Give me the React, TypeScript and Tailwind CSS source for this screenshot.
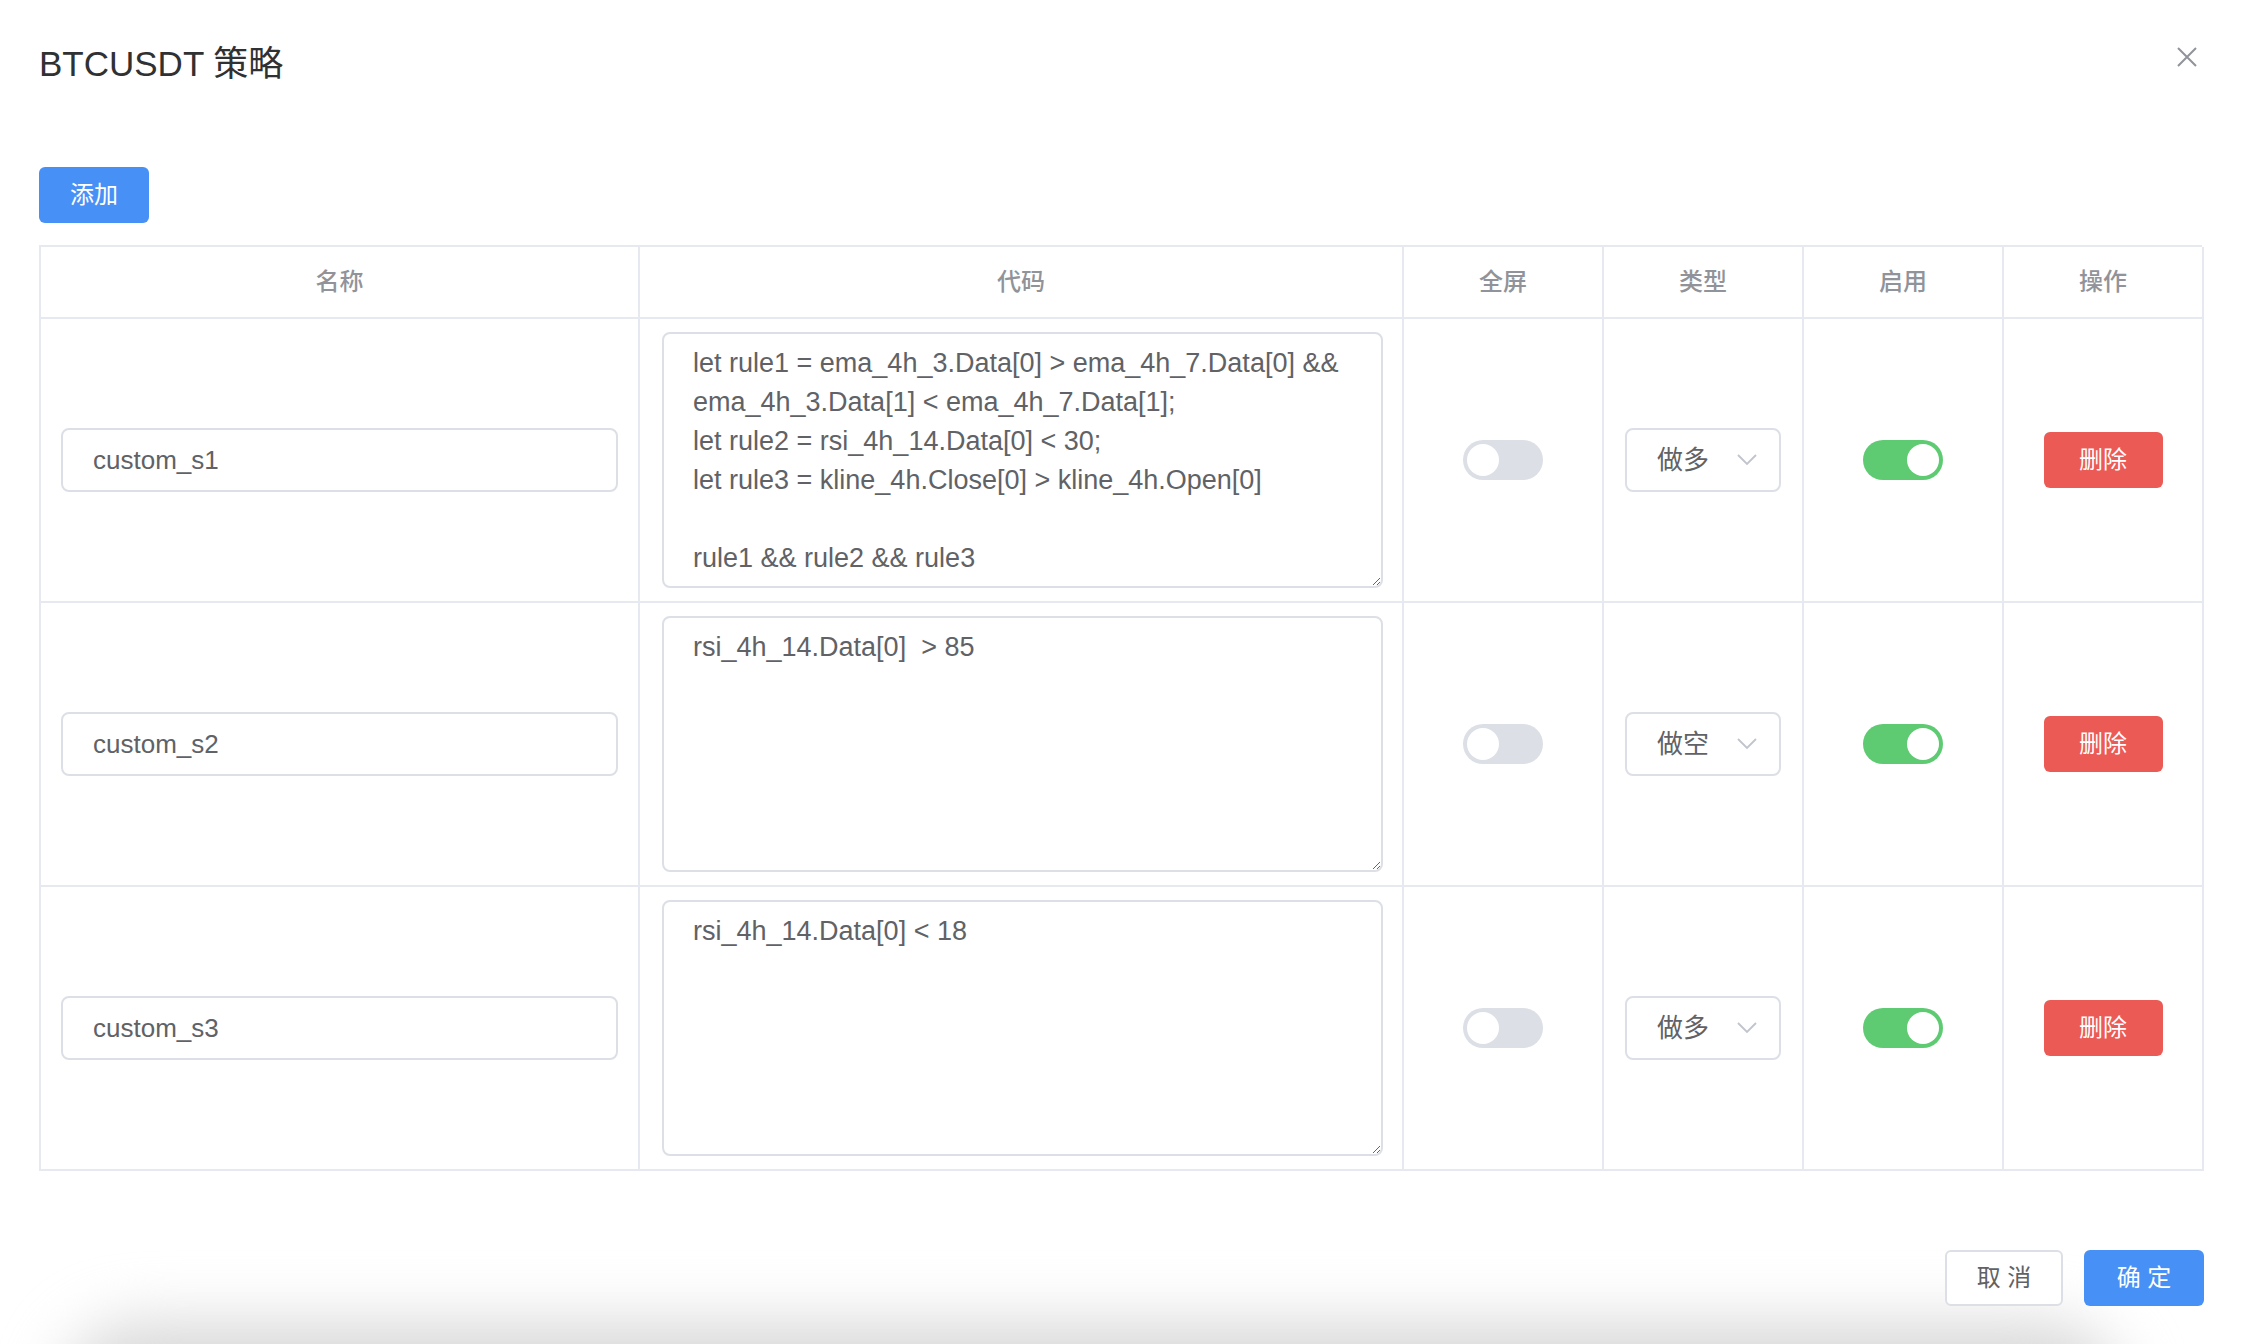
import React from "react";

interface Strategy {
  name: string;
  code: string;
  fullscreen: boolean;
  type: string;
  enabled: boolean;
}

const rows: Strategy[] = [
  {
    name: "custom_s1",
    code:
      "let rule1 = ema_4h_3.Data[0] > ema_4h_7.Data[0] &&\nema_4h_3.Data[1] < ema_4h_7.Data[1];\nlet rule2 = rsi_4h_14.Data[0] < 30;\nlet rule3 = kline_4h.Close[0] > kline_4h.Open[0]\n\nrule1 && rule2 && rule3",
    fullscreen: false,
    type: "做多",
    enabled: true,
  },
  { name: "custom_s2", code: "rsi_4h_14.Data[0]  > 85", fullscreen: false, type: "做空", enabled: true },
  { name: "custom_s3", code: "rsi_4h_14.Data[0] < 18", fullscreen: false, type: "做多", enabled: true },
];

const headers = ["名称", "代码", "全屏", "类型", "启用", "操作"];

function Switch({ on }: { on: boolean }) {
  return (
    <div
      className={`flex h-[40px] w-[80px] items-center rounded-full p-[4px] ${
        on ? "justify-end bg-[#5ecb72]" : "justify-start bg-[#dcdfe6]"
      }`}
    >
      <div className="h-[32px] w-[32px] rounded-full bg-white" />
    </div>
  );
}

function Cell({ children, className = "" }: { children?: React.ReactNode; className?: string }) {
  return (
    <div className={`flex items-center border-b-2 border-r-2 border-[#e6e9f0] ${className}`}>{children}</div>
  );
}

export default function App() {
  return (
    <div
      className="relative h-[1344px] w-full overflow-hidden bg-white text-[#606266]"
      style={{ fontFamily: '"Liberation Sans", "Noto Sans CJK SC", sans-serif' }}
    >
      {/* soft shadow along the bottom edge */}
      <div className="absolute left-[60px] right-[120px] top-[1322px] h-[200px] rounded-[80px] bg-[#d8d8d8] blur-[30px]" />

      <div className="relative flex flex-col">
        {/* Title bar */}
        <div className="flex items-start justify-between pl-[39px] pr-[47px] pt-[40px]">
          <h2 className="text-[35px] leading-[48px] text-[#303133]">BTCUSDT 策略</h2>
          <svg className="mt-[7px]" width="20" height="20" viewBox="0 0 20 20">
            <path d="M1 1L19 19M19 1L1 19" stroke="#909399" strokeWidth="2" fill="none" />
          </svg>
        </div>

        {/* Add */}
        <div className="mt-[79px] pl-[39px]">
          <button className="h-[56px] w-[110px] rounded-[6px] bg-[#4790f6] text-[24px] text-white">添加</button>
        </div>

        {/* Table */}
        <div className="ml-[39px] mt-[22px] grid w-[2163px] grid-cols-[599px_764px_200px_200px_200px_200px] border-l-2 border-t-2 border-[#e6e9f0]">
          {headers.map((h) => (
            <Cell key={h} className="h-[72px] justify-center text-[24px] font-medium text-[#909399]">
              {h}
            </Cell>
          ))}

          {rows.map((r) => (
            <React.Fragment key={r.name}>
              <Cell className="h-[284px] px-[20px]">
                <div className="flex h-[64px] w-full items-center rounded-[8px] border-2 border-[#dcdfe6] pl-[30px] text-[26px]">
                  {r.name}
                </div>
              </Cell>
              <Cell className="h-[284px] pl-[22px] pr-[19px]">
                <textarea
                  readOnly
                  value={r.code}
                  className="h-[256px] w-full resize-y rounded-[8px] border-2 border-[#dcdfe6] px-[29px] pt-[10px] text-[27px] leading-[39px] text-[#606266] outline-none"
                />
              </Cell>
              <Cell className="h-[284px] justify-center">
                <Switch on={r.fullscreen} />
              </Cell>
              <Cell className="h-[284px] justify-center">
                <div className="flex h-[64px] w-[156px] items-center justify-between rounded-[8px] border-2 border-[#dcdfe6] pl-[30px] pr-[22px] text-[26px]">
                  <span>{r.type}</span>
                  <svg width="20" height="12" viewBox="0 0 20 12">
                    <polyline points="1,1 10,10 19,1" stroke="#c0c4cc" strokeWidth="1.8" fill="none" />
                  </svg>
                </div>
              </Cell>
              <Cell className="h-[284px] justify-center">
                <Switch on={r.enabled} />
              </Cell>
              <Cell className="h-[284px] justify-center">
                <button className="h-[56px] w-[119px] rounded-[6px] bg-[#eb5a55] text-[24px] text-white">删除</button>
              </Cell>
            </React.Fragment>
          ))}
        </div>

        {/* Footer */}
        <div className="mt-[79px] flex justify-end gap-[21px] pr-[40px]">
          <button className="h-[56px] w-[118px] rounded-[6px] border-2 border-[#dcdfe6] bg-white text-[24px] text-[#606266]">
            取 消
          </button>
          <button className="h-[56px] w-[120px] rounded-[6px] bg-[#4790f6] text-[24px] text-white">确 定</button>
        </div>
      </div>
    </div>
  );
}
